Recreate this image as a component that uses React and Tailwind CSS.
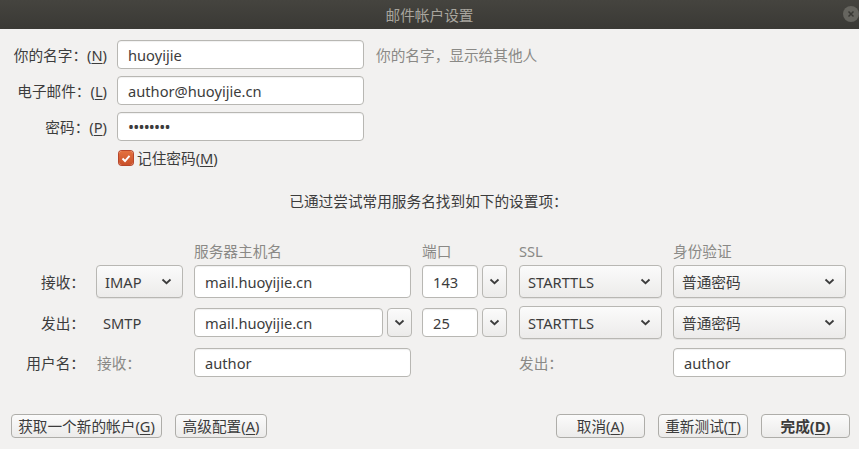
import React from 'react';

const font = { fontFamily: '"Noto Sans", "Noto Sans CJK SC", sans-serif' };

function Chevron() {
  return (
    <svg width="11" height="7" viewBox="0 0 11 7" className="shrink-0">
      <path d="M1.5 1.5 L5.5 5.2 L9.5 1.5" fill="none" stroke="#3c3c3c" strokeWidth="1.8" />
    </svg>
  );
}

function TextInput({ value, className = '' }) {
  return (
    <div className={`flex items-center rounded-[4px] border border-[#b8b7b3] bg-white pl-[10px] text-[#3c3c3c] shadow-[inset_0_1px_1px_rgba(0,0,0,0.06)] ${className}`}>
      {value}
    </div>
  );
}

function Select({ value, className = '' }) {
  return (
    <div className={`flex items-center justify-between rounded-[4px] border border-[#b8b7b3] bg-gradient-to-b from-[#fbfbfb] to-[#ecebea] pl-[8px] pr-[10px] text-[#3c3c3c] shadow-[0_1px_0_rgba(0,0,0,0.06)] ${className}`}>
      <span>{value}</span>
      <Chevron />
    </div>
  );
}

function DropBtn({ className = '' }) {
  return (
    <div className={`flex items-center justify-center rounded-[4px] border border-[#b8b7b3] bg-gradient-to-b from-[#fbfbfb] to-[#ecebea] ${className}`}>
      <Chevron />
    </div>
  );
}

function Button({ children, className = '' }) {
  return (
    <div className={`flex h-[24px] items-center justify-center rounded-[4px] border border-[#aeada9] bg-gradient-to-b from-[#fbfbfb] to-[#ecebea] px-[6px] text-[#3c3c3c] ${className}`}>
      {children}
    </div>
  );
}

const U = ({ children }) => <span className="underline underline-offset-2">{children}</span>;

export default function App() {
  return (
    <div className="flex h-[449px] w-[859px] flex-col overflow-hidden bg-[#f2f1f0] text-[14.67px] leading-[20px] text-[#3c3c3c]" style={font}>
      {/* Title bar */}
      <div className="relative flex h-[29px] shrink-0 items-center justify-center bg-gradient-to-b from-[#45443f] to-[#3a3935] text-[#a8a59e]">
        <span>邮件帐户设置</span>
        <div className="absolute left-[843px] top-[6px] flex h-[16px] w-[16px] items-center justify-center rounded-full bg-[#66655f]">
          <svg width="8" height="8" viewBox="0 0 8 8">
            <path d="M1.5 1.5 L6.5 6.5 M6.5 1.5 L1.5 6.5" stroke="#3a3935" strokeWidth="1.5" />
          </svg>
        </div>
      </div>

      {/* Identity fields */}
      <div className="flex flex-col gap-[7px] pt-[11px]">
        <div className="flex h-[29px] items-center">
          <div className="w-[107px] text-right">你的名字：(<U>N</U>)</div>
          <TextInput value="huoyijie" className="ml-[10px] h-[29px] w-[247px]" />
          <div className="ml-[12px] text-[#8a8986]">你的名字，显示给其他人</div>
        </div>
        <div className="flex h-[29px] items-center">
          <div className="w-[107px] text-right">电子邮件：(<U>L</U>)</div>
          <TextInput value="author@huoyijie.cn" className="ml-[10px] h-[29px] w-[247px]" />
        </div>
        <div className="flex h-[29px] items-center">
          <div className="w-[107px] text-right">密码：(<U>P</U>)</div>
          <TextInput value="••••••••" className="ml-[10px] h-[29px] w-[247px] text-[16px] tracking-[-0.8px]" />
        </div>
      </div>

      <div className="ml-[119px] mt-[9px] flex h-[16px] items-center gap-[4px]">
        <div className="flex h-[14px] w-[14px] items-center justify-center rounded-[3px] bg-gradient-to-b from-[#e4713f] to-[#c9502a] shadow-[0_0_0_1px_#b8462a]">
          <svg width="10" height="9" viewBox="0 0 10 9">
            <path d="M1.5 4.5 L4 7 L8.5 1.8" fill="none" stroke="#fff" strokeWidth="1.9" />
          </svg>
        </div>
        <span>记住密码(<U>M</U>)</span>
      </div>

      <div className="mt-[25px] text-center pr-[2px]">已通过尝试常用服务名找到如下的设置项：</div>

      {/* Server grid */}
      <div className="mt-[30px] grid grid-cols-[96px_98px_228px_97px_154px_173px] items-center text-[#3c3c3c]">
        <div />
        <div />
        <div className="h-[20px] text-[#8a8986]">服务器主机名</div>
        <div className="text-[#8a8986]">端口</div>
        <div className="text-[#8a8986]">SSL</div>
        <div className="text-[#8a8986]">身份验证</div>

        <div className="mt-[4px] pr-[11px] text-right">接收：</div>
        <Select value="IMAP" className="mt-[4px] h-[33px] w-[87px]" />
        <TextInput value="mail.huoyijie.cn" className="mt-[4px] h-[33px] w-[217px]" />
        <div className="mt-[4px] flex gap-[4px]">
          <TextInput value="143" className="h-[33px] w-[56px]" />
          <DropBtn className="h-[33px] w-[25px]" />
        </div>
        <Select value="STARTTLS" className="mt-[4px] h-[33px] w-[143px]" />
        <Select value="普通密码" className="mt-[4px] h-[33px] w-[173px]" />

        <div className="mt-[8px] pr-[11px] text-right">发出：</div>
        <div className="mt-[8px] pl-[7px]">SMTP</div>
        <div className="mt-[8px] flex gap-[4px]">
          <TextInput value="mail.huoyijie.cn" className="h-[29px] w-[189px]" />
          <DropBtn className="h-[29px] w-[25px]" />
        </div>
        <div className="mt-[8px] flex gap-[4px]">
          <TextInput value="25" className="h-[29px] w-[56px]" />
          <DropBtn className="h-[29px] w-[25px]" />
        </div>
        <Select value="STARTTLS" className="mt-[8px] h-[33px] w-[143px]" />
        <Select value="普通密码" className="mt-[8px] h-[33px] w-[173px]" />

        <div className="mt-[9px] pr-[11px] text-right">用户名：</div>
        <div className="mt-[9px] pl-[1px] text-[#8a8986]">接收：</div>
        <TextInput value="author" className="mt-[9px] h-[29px] w-[217px]" />
        <div className="mt-[9px]" />
        <div className="mt-[9px] text-[#8a8986]">发出：</div>
        <TextInput value="author" className="mt-[9px] h-[29px] w-[173px]" />
      </div>

      {/* Buttons */}
      <div className="mt-[37px] flex items-center pl-[11px] pr-[9px]">
        <Button className="w-[151px]">获取一个新的帐户(<U>G</U>)</Button>
        <Button className="ml-[13px] w-[92px]">高级配置(<U>A</U>)</Button>
        <div className="flex-1" />
        <Button className="w-[89px]">取消(<U>A</U>)</Button>
        <Button className="ml-[13px] w-[90px]">重新测试(<U>T</U>)</Button>
        <Button className="ml-[13px] w-[89px] font-bold">完成(<U>D</U>)</Button>
      </div>
    </div>
  );
}
